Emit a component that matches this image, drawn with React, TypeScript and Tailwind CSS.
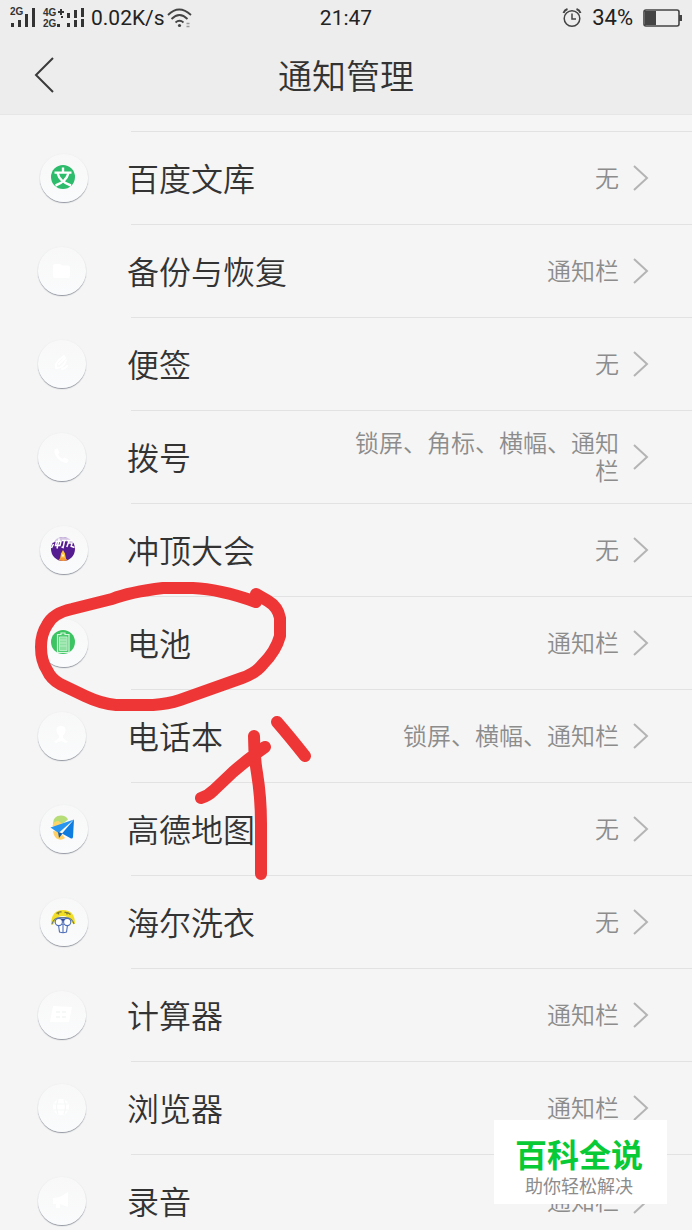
import type { ReactNode } from "react";

type AppRow = { name: string; value: string; icon: ReactNode; tinted?: boolean };

function Disc({ fill }: { fill: string }) {
  return <circle cx="23" cy="23" r="12" fill={fill} />;
}

const rows: AppRow[] = [
  {
    name: "百度文库",
    value: "无",
    tinted: true,
    icon: (
      <>
        <Disc fill="#2dbb6c" />
        <g fill="none" stroke="#fff" strokeWidth="2.4">
          <path d="M23 13.5v4M14.5 18.6h17M17.5 19c1.500 6 6 10 13.500 12.500M28.500 19c-1.500 6-6 10-13 12.500" />
        </g>
      </>
    ),
  },
  {
    name: "备份与恢复",
    value: "通知栏",
    icon: <path d="M15 19q0-2 2-2h5l2 1.500h6q2 0 2 2V29q0 2-2 2H17q-2 0-2-2z" fill="#fff" />,
  },
  {
    name: "便签",
    value: "无",
    icon: (
      <path d="M18 28q-2-5 8-12M19 28q6 0 9-7.500M21 24l6-6M24 29q4-1 5-3" fill="none" stroke="#fff" strokeWidth="2" strokeLinecap="round" />
    ),
  },
  {
    name: "拨号",
    value: "锁屏、角标、横幅、通知栏",
    icon: (
      <path d="M17 16l2.500-.5 2 4-1.500 2q1.500 3 4.500 4.500l2-1.500 4 2-.5 2.500q-1.500 1.500-4 .5-7-2.500-9.500-9.500-.5-2.500.5-4z" fill="#fff" />
    ),
  },
  {
    name: "冲顶大会",
    value: "无",
    tinted: true,
    icon: (
      <>
        <Disc fill="#551c91" />
        <path d="M11 17.500q3-6.500 12-6.500t12 6.500l-4-1.500-8-1.500-8 1.500z" fill="#fff" opacity="0.75" />
        <path
          d="M14.500 13.500l-1.500 2.500M13.500 18l-2 4M16.500 15.500l-1 4h4.500l1-4.200zM19.200 12.500l-2.200 10M22 14.500h4.500M24.600 14.500l-1.500 7-1.500-.5M27 14.500h5M29 15l-2.200 6M28.500 17h3.500l-.8 3.500M30.500 20l4 1.500"
          fill="none"
          stroke="#fff"
          strokeWidth="1.500"
        />
        <path d="M23 24l2 3.500 1 5.500h-6l1-5.500z" fill="#ffc23d" />
        <path d="M18.500 34q1.500-3 4.500-2.500t4.500 2.500q-4 1.800-9 0z" fill="#f79a35" />
        <path d="M22 28.500h2v2h-2z" fill="#fff3c8" />
      </>
    ),
  },
  {
    name: "电池",
    value: "通知栏",
    tinted: true,
    icon: (
      <>
        <Disc fill="#3dc462" />
        <path d="M17.500 15.500h3.500v-1.500h4v1.500h4V33.500H17.500z" fill="#4fcb71" stroke="#d6f5dc" strokeWidth="1.200" />
        <path d="M19.500 18h7.500v13.500h-7.500z" fill="#8de0a2" stroke="#b9efc6" strokeWidth="1" />
        <path d="M20 21h6.500M20 24h6.500M20 27h6.500" stroke="#b9efc6" strokeWidth="1" />
      </>
    ),
  },
  {
    name: "电话本",
    value: "锁屏、横幅、通知栏",
    icon: <path d="M23 14q5 0 4.500 5-.5 3-2.500 4.500v2q1 2 5 4l-2 1.500-5-2-5 2-2-1.500q4-2 5-4v-2q-2-1.500-2.500-4.500-.5-5 4.500-5z" fill="#fff" />,
  },
  {
    name: "高德地图",
    value: "无",
    tinted: true,
    icon: (
      <>
        <path d="M13 19q0-8.500 8-8.500 5 0 7 4l-5 4z" fill="#b6dd77" />
        <path d="M12.500 21q1-5 6-5l4 3-4 6z" fill="#ffd56a" />
        <path d="M13 26l7 1 5 6q-4 3-8.500.5-3-2.500-3.500-7.500z" fill="#ffd068" />
        <path d="M34 14.500L33 32q-.3 2-2 1.500l-9-5z" fill="#0f7de0" />
        <path d="M10.500 22.500L34 14.500 18.500 28z" fill="#2795f0" />
        <path d="M18 27l4.500 1.500-3.500 4.500z" fill="#0b5bb0" />
      </>
    ),
  },
  {
    name: "海尔洗衣",
    value: "无",
    tinted: true,
    icon: (
      <>
        <path d="M11 27q0-15 12-15t12 14q-3 0-4-3-3-5-8-5-6 0-8 5-1 4-4 4z" fill="#f3de26" />
        <path d="M16.500 15.500q2.500-2 5-1.500M18.500 14v2.500M24.500 14.500q3-.5 6 2M27 14.500v2" stroke="#7d7a35" strokeWidth="1.400" fill="none" />
        <g fill="#fff" stroke="#4f6fb8" strokeWidth="1.100">
          <path d="M12 26q2-7 9-6.500h4q7-.5 9 6.500" fill="none" stroke="#6b7d86" />
          <path d="M18.500 27q5-1.500 9 0l-1 7q-3.500 1.500-7 0zM23 27v7.500" />
          <circle cx="18.800" cy="24" r="3.600" />
          <circle cx="27.200" cy="24" r="3.600" />
        </g>
        <path d="M20.500 20.500h5l-2.500 3z" fill="#2f4b98" />
      </>
    ),
  },
  {
    name: "计算器",
    value: "通知栏",
    icon: (
      <>
        <path d="M15 15l19 1-3 15H12z" fill="#fff" />
        <path d="M18 20h4v2h-4zM24 20h4v2h-4zM18 25h4v2h-4zM24 25h4v2h-4z" fill="#f6f7f7" />
      </>
    ),
  },
  {
    name: "浏览器",
    value: "通知栏",
    icon: (
      <>
        <circle cx="23" cy="23" r="8" fill="#fff" />
        <path d="M16 20h14M16 26h14M20 16q-3 7 0 14M26 16q3 7 0 14" fill="none" stroke="#f6f7f7" strokeWidth="1.200" />
      </>
    ),
  },
  {
    name: "录音",
    value: "通知栏",
    icon: <path d="M15 21l7-1 8-5v15l-8-3v4h-4v-4h-3z" fill="#fff" />,
  },
];

function AppIcon({ children, tinted }: { children: ReactNode; tinted?: boolean }) {
  return (
    <span className={tinted ? "w-[89px] shrink-0 pl-[2px]" : "w-[89px] shrink-0"}>
      <span className="block size-12 rounded-full bg-linear-to-b from-[#f8f8f8] to-[#fafbfc] shadow-[0_0_2px_#ebedef,0_1px_1px_#6f7580]">
        <svg viewBox="0 0 48 48" className="size-12" aria-hidden="true">
          {children}
        </svg>
      </span>
    </span>
  );
}

function Row({ row }: { row: AppRow }) {
  return (
    <li>
      <a href="#" className="flex h-[92px] items-center pr-[43px] pl-[38px]">
        <AppIcon tinted={row.tinted}>{row.icon}</AppIcon>
        <span className="shrink-0 pb-[2px] text-[32px] leading-10 font-[350] text-[#333]">{row.name}</span>
        <span className="ml-auto max-w-[280px] pb-[2px] text-right text-[24px] leading-7 font-[350] text-[#8c8c8c]">{row.value}</span>
        <svg viewBox="0 0 16 28" className="ml-[14px] h-7 w-4 shrink-0" fill="none" stroke="#b4b4b4" strokeWidth="2" aria-hidden="true">
          <path d="M1 2l13 12L1 26" />
        </svg>
      </a>
      <div className="ml-[131px] h-px bg-[#e2e2e2]" />
    </li>
  );
}

function StatusBar() {
  return (
    <div className="grid h-9 grid-cols-3 items-center pr-[10px] pl-[10px] font-[Roboto,sans-serif] text-[21px] leading-6 text-[#222]">
      <div className="flex items-center gap-[6px]">
        <svg
          viewBox="0 -4 75 28"
          className="h-7 w-[75px] shrink-0"
          fill="#333"
          fontFamily="Liberation Sans, sans-serif"
          fontWeight="700"
          aria-hidden="true"
        >
          <text x="0" y="7" fontSize="10">2G</text>
          <path d="M1 15h3v4H1zM8 12h3v7H8zM15 6h3v13h-3zM22 0h3v19h-3z" />
          <text x="33" y="8" fontSize="10">4G</text>
          <path d="M48 3h2V1h2v2h2v2h-2v2h-2V5h-2z" />
          <text x="33" y="19" fontSize="10">2G</text>
          <path d="M47 16h3v3h-3zM51 8h2v2h-2zM57 5h3v5h-3zM57 15h3v4h-3zM64 2h3v8h-3zM64 12h3v7h-3zM71 0h3v9h-3zM71 11h3v8h-3z" />
        </svg>
        <span>0.02K/s</span>
        <svg viewBox="0 0 25 20" className="-ml-[4px] h-5 w-[25px] shrink-0" fill="none" stroke="#444" strokeWidth="1.800" aria-hidden="true">
          <path d="M1 7q11-11 23 0M4.500 11q8-8 16 0M8.500 14.500q4-3.500 8 0" />
          <circle cx="12.500" cy="17.500" r="1.600" fill="#444" stroke="none" />
          <path d="M19.500 15.500h3M19.500 18.500h3" stroke="#999" strokeWidth="1.300" />
        </svg>
      </div>
      <time className="text-center">21:47</time>
      <div className="flex items-center justify-end gap-[10px]">
        <svg viewBox="0 0 20 20" className="size-5" fill="none" stroke="#444" strokeWidth="1.500" aria-hidden="true">
          <circle cx="10" cy="10.500" r="7.800" />
          <path d="M10 5.500V11h4" />
          <path d="M1.500 5q1-3 4-4M18.500 5q-1-3-4-4" strokeWidth="2" />
        </svg>
        <span className="text-[22px]">34%</span>
        <svg viewBox="0 0 39 18" className="h-[18px] w-[39px]" fill="#444" aria-hidden="true">
          <rect x="1" y="1" width="35" height="16" rx="2" fill="none" stroke="#444" strokeWidth="1.600" />
          <path d="M2 2h11v14H2zM36 6h3v6h-3z" />
        </svg>
      </div>
    </div>
  );
}

function Marker() {
  return (
    <svg
      viewBox="0 0 300 310"
      className="pointer-events-none absolute top-[575px] left-[20px] h-[310px] w-[300px]"
      fill="none"
      stroke="#ee3636"
      strokeWidth="12"
      strokeLinecap="round"
      strokeLinejoin="round"
      aria-hidden="true"
    >
      <path d="M236 27Q200 14 173 13H143Q110 17 92 24L52 34Q33 38 27 50Q21 59 21 72Q21 86 27 95Q31 104 40 109L65 121Q82 129 96 130H133Q148 129 160 125L222 103Q236 98 243 89Q256 76 260 61V43Q258 32 248 26L236 19V27" />
      <path d="M234 161Q234 180 237 198Q241 222 241 249V299M245 172Q228 184 213 197L194 215Q188 221 181 223M257 147Q270 162 285 181" />
    </svg>
  );
}

export default function App() {
  return (
    <div className="relative flex h-screen flex-col overflow-hidden bg-[#f5f5f5] font-['Noto_Sans_CJK_SC',sans-serif]">
      <header className="shrink-0 border-b border-[#e6e6e6] bg-[#ededed]">
        <StatusBar />
        <div className="grid h-[78px] grid-cols-[80px_1fr_80px] items-center">
          <button type="button" aria-label="返回" className="pl-[34px]">
            <svg viewBox="0 0 20 36" className="h-9 w-5" fill="none" stroke="#3a3a3a" strokeWidth="2">
              <path d="M19 1L2 18l17 17" />
            </svg>
          </button>
          <h1 className="text-center text-[34px] leading-10 font-[350] text-[#333]">通知管理</h1>
        </div>
      </header>
      <main className="min-h-0 flex-1 overflow-y-auto pt-4 [scrollbar-width:none]">
        <div className="ml-[131px] h-px bg-[#e2e2e2]" />
        <ul>
          {rows.map((row) => (
            <Row key={row.name} row={row} />
          ))}
        </ul>
      </main>
      <Marker />
      <aside className="absolute right-[25px] bottom-[26px] flex flex-col items-center bg-white pt-[13px] pr-6 pb-[7px] pl-[21px]">
        <strong className="text-[32px] leading-10 font-bold text-[#08c936]">百科全说</strong>
        <span className="text-[18px] leading-6 text-[#8c8c8c]">助你轻松解决</span>
      </aside>
    </div>
  );
}
